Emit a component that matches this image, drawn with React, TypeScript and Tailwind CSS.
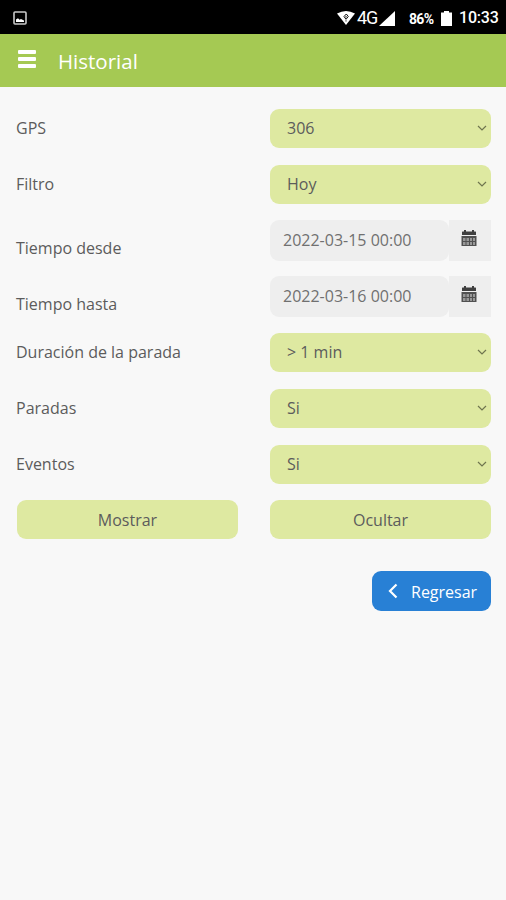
import type { ReactNode } from "react";

type Field = {
  label: string;
  value: string;
  kind: "select" | "date";
};

const fields: Field[] = [
  { label: "GPS", value: "306", kind: "select" },
  { label: "Filtro", value: "Hoy", kind: "select" },
  { label: "Tiempo desde", value: "2022-03-15 00:00", kind: "date" },
  { label: "Tiempo hasta", value: "2022-03-16 00:00", kind: "date" },
  { label: "Duración de la parada", value: "> 1 min", kind: "select" },
  { label: "Paradas", value: "Si", kind: "select" },
  { label: "Eventos", value: "Si", kind: "select" },
];

const StatusBar = () => (
  <div className="flex h-[34px] items-center bg-black pl-[13px] pr-2 pt-0.5 font-['Roboto',sans-serif] text-white">
    <svg width="14" height="14" viewBox="0 0 14 14" fill="none">
      <rect x="1" y="1" width="12" height="12" rx="1" stroke="#c9c9c9" strokeWidth="1.6" />
      <path d="M3 11V8.5L5 7.2L6.5 8.7L8 8L11 9.5V11Z" fill="#fff" />
    </svg>
    <svg className="ml-auto" width="18" height="14" viewBox="0 0 18 14">
      <path d="M0 2.5Q9 -2.5 18 2.5L9 14Z" fill="#fff" />
      <path d="M7 5.5L9.3 3L11.3 5.5L9 8.3ZM9 5V6.5M9 9.3V10.5" stroke="#111" strokeWidth="1" fill="none" />
    </svg>
    <span className="ml-[2px] w-[21px] text-[18px] leading-none tracking-[-1.2px]">4G</span>
    <svg className="ml-px" width="16" height="15" viewBox="0 0 16 15">
      <path d="M16 0V15H0Z" fill="#fff" />
    </svg>
    <span className="ml-[14px] w-[26px] whitespace-nowrap pt-px text-[14px] font-bold leading-none tracking-[-0.7px]">86%</span>
    <svg className="ml-[6px]" width="11" height="15" viewBox="0 0 11 15">
      <path d="M3 0H8V1.5H11V15H0V1.5H3Z" fill="#fff" />
    </svg>
    <span className="ml-[7px] w-[39px] whitespace-nowrap text-[16px] font-medium leading-none tracking-[-0.2px]">10:33</span>
  </div>
);

const Header = () => (
  <header className="flex h-[53px] items-center bg-[#a5c953] pl-[18px] text-white">
    <button className="mb-1 flex w-[18px] flex-col gap-[3px]" aria-label="Menu">
      <span className="h-1 rounded-[1px] bg-white" />
      <span className="h-1 rounded-[1px] bg-white" />
      <span className="h-1 rounded-[1px] bg-white" />
    </button>
    <h1 className="ml-[22px] pt-0.5 text-[20.5px] leading-none">Historial</h1>
  </header>
);

const SelectBox = ({ value }: { value: string }) => (
  <div className="flex h-[39px] items-center justify-between rounded-[9px] bg-[#dee9a1] pb-0.5 pl-[17px] pr-1">
    <span>{value}</span>
    <svg width="10" height="6" viewBox="0 0 10 6" fill="none">
      <path d="M1 1L5 5L9 1" stroke="#6f754f" strokeWidth="1.2" />
    </svg>
  </div>
);

const CalendarIcon = () => (
  <svg width="16" height="17" viewBox="0 0 16 17">
    <path d="M3 0H5V1.5H11V0H13V1.5H14.5Q15 1.5 15 2V5H1V2Q1 1.5 1.5 1.5H3Z" fill="#404040" />
    <path d="M0.5 6H15.5V16H0.5Z" fill="#505050" />
    <path d="M2 8H4.5V11H2ZM5.5 8H8V11H5.5ZM9 8H11V11H9ZM12 8H14V11H12ZM2 12H4.5V15H2ZM5.5 12H8V15H5.5ZM9 12H11V15H9ZM12 12H14V15H12Z" fill="#989898" />
  </svg>
);

const DateBox = ({ value }: { value: string }) => (
  <div className="-mt-px flex h-[41px] text-[#707070]">
    <div className="flex w-[179px] items-center rounded-[9px] bg-[#eeeeee] pb-px pl-[13px]">{value}</div>
    <div className="flex flex-1 justify-center bg-[#eeeeee] pr-0.5 pt-[10px]">
      <CalendarIcon />
    </div>
  </div>
);

const ActionButton = ({ children }: { children: ReactNode }) => (
  <button className="h-[39px] rounded-[9px] bg-[#dee9a1] leading-none">{children}</button>
);

export default function App() {
  return (
    <div className="min-h-[900px] bg-[#f8f8f8] font-['Open_Sans',sans-serif] text-[16px] text-[#5c5c5c]">
      <StatusBar />
      <Header />

      <main className="pl-4 pr-[15px] pt-[22px]">
        {fields.map((field) => (
          <div key={field.label} className="grid h-14 grid-cols-2 gap-x-[33px]">
            <div className={field.kind === "date" ? "pt-[15px]" : "pt-[7px]"}>{field.label}</div>
            {field.kind === "date" ? <DateBox value={field.value} /> : <SelectBox value={field.value} />}
          </div>
        ))}

        <div className="-mt-px grid grid-cols-2 gap-x-8 pl-px">
          <ActionButton>Mostrar</ActionButton>
          <ActionButton>Ocultar</ActionButton>
        </div>

        <div className="mt-8 flex justify-end">
          <button className="flex h-10 w-[119px] items-center rounded-[9px] bg-[#2880d5] pl-[15px] text-white">
            <svg className="mb-px" width="11" height="16" viewBox="0 0 11 16" fill="none">
              <path d="M9.5 1.5L3 8L9.5 14.5" stroke="#fff" strokeWidth="2.2" />
            </svg>
            <span className="ml-[13px] pt-px">Regresar</span>
          </button>
        </div>
      </main>
    </div>
  );
}
